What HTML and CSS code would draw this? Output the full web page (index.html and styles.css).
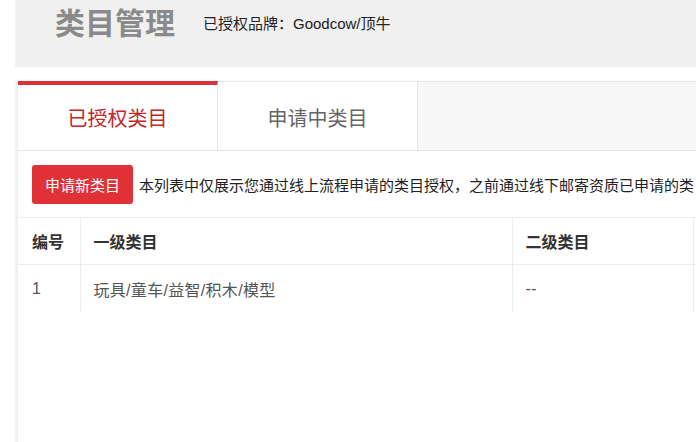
FILE: index.html
```html
<!DOCTYPE html>
<html lang="zh-CN">
<head>
    <meta charset="UTF-8">
    <title>类目管理</title>
    <link rel="stylesheet" href="styles.css">
</head>
<body>
<div class="page">
    <div class="head">
        <h1>类目管理</h1>
        <span class="brand">已授权品牌：Goodcow/顶牛</span>
    </div>

    <div class="panel">
        <div class="tabs">
            <div class="tab active">已授权类目</div>
            <div class="tab">申请中类目</div>
            <div class="tab-rest"></div>
        </div>

        <div class="toolbar">
            <button class="btn">申请新类目</button>
            <span class="note">本列表中仅展示您通过线上流程申请的类目授权，之前通过线下邮寄资质已申请的类</span>
        </div>

        <table class="grid">
            <colgroup>
                <col class="c-no">
                <col class="c-first">
                <col class="c-second">
                <col class="c-op">
            </colgroup>
            <tr>
                <th>编号</th>
                <th>一级类目</th>
                <th>二级类目</th>
                <th></th>
            </tr>
            <tr>
                <td>1</td>
                <td>玩具/童车/益智/积木/模型</td>
                <td>--</td>
                <td></td>
            </tr>
        </table>
    </div>
</div>
</body>
</html>
```

FILE: styles.css
```css
body {
    margin: 0;
    overflow: hidden;
    font-family: "Liberation Sans", "Noto Sans CJK SC", sans-serif;
    color: #333;
    background: #fff;
}
.page { width: 1000px; padding-left: 15px; }

/* page head */
.head {
    display: flex;
    align-items: center;
    height: 48px;
    padding: 0 0 19px 40px;
    background: #f0f0f0;
}
.head h1 {
    margin: 0 28px 0 0;
    font-size: 30px;
    line-height: 40px;
    font-weight: bold;
    color: #8a8a8a;
}
.brand { font-size: 15px; color: #222; margin-bottom: 4px; }

/* panel with tabs */
.panel {
    margin: 14px 0 0 2px;
    min-height: 380px;
    border-left: 1px solid #ececec;
    box-shadow: -2px 0 3px rgba(0, 0, 0, 0.06);
}
.tabs { display: flex; height: 69px; }
.tab {
    box-sizing: border-box;
    width: 200px;
    height: 69px;
    padding-top: 3px;
    border-top: 1px solid #e8e8e8;
    border-right: 1px solid #e8e8e8;
    background: #fff;
    font-size: 20px;
    color: #666;
    display: flex;
    align-items: center;
    justify-content: center;
}
.tab.active {
    border-top: 4px solid #d9333a;
    padding-top: 0;
    color: #c0262c;
}
.tab-rest {
    flex: 1;
    border-top: 1px solid #e8e8e8;
    background: #f7f7f7;
}

.toolbar {
    display: flex;
    align-items: center;
    padding: 14px 0 13px 14px;
    border-top: 1px solid #e6e6e6;
    white-space: nowrap;
}
.btn {
    height: 39px;
    padding: 0 13px;
    margin-right: 6px;
    border: none;
    border-radius: 3px;
    background: #e03236;
    color: #fff;
    font-family: inherit;
    font-size: 15px;
    cursor: pointer;
}
.note { font-size: 15px; color: #222; }

/* table */
.grid {
    table-layout: fixed;
    width: 880px;
    border-collapse: collapse;
    border-top: 1px solid #ececec;
}
.c-no { width: 62px; }
.c-first { width: 432px; }
.c-second { width: 181px; }
.grid th,
.grid td {
    padding: 0 13px;
    text-align: left;
    border-left: 1px solid #ececec;
    font-size: 16px;
}
.grid th:first-child,
.grid td:first-child { border-left: none; padding-left: 14px; }
.grid th {
    height: 46px;
    font-weight: bold;
    color: #333;
    border-bottom: 1px solid #ececec;
}
.grid td { height: 48px; color: #555; letter-spacing: 0.3px; }
```
